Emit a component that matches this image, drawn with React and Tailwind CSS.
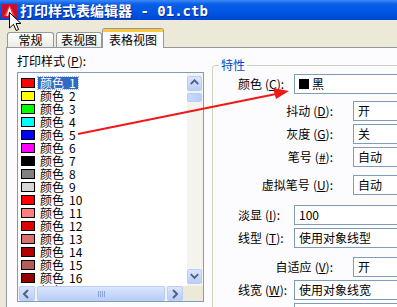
import React from "react";

const swatches = [
  "#ff0000", "#ffff00", "#00ff00", "#00ffff", "#0000ff", "#ff00ff",
  "#000000", "#808080", "#d6d6d6", "#ff0000", "#ff7f7f", "#dd0000",
  "#dd6e6e", "#b00000", "#b35c5c", "#960000", "#cc0000",
];

const props = [
  { t: "颜色", k: "C", v: "黑", wide: true, mt: "mt-[2px]", swatch: true },
  { t: "抖动", k: "D", v: "开", mt: "mt-[7px]" },
  { t: "灰度", k: "G", v: "关", mt: "mt-[3px]" },
  { t: "笔号", k: "#", v: "自动", mt: "mt-[3px]" },
  { t: "虚拟笔号", k: "U", v: "自动", mt: "mt-[8px]" },
  { t: "淡显", k: "I", v: "100", wide: true, mt: "mt-[10px]" },
  { t: "线型", k: "T", v: "使用对象线型", wide: true, mt: "mt-[3px]" },
  { t: "自适应", k: "V", v: "开", mt: "mt-[9px]" },
  { t: "线宽", k: "W", v: "使用对象线宽", wide: true, mt: "mt-[3px]" },
  { t: "端点", k: "E", v: "使用对象端点样式", wide: true, mt: "mt-[3px]" },
];

function Arrow({ dir }) {
  const d = {
    up: "M3 7 L7 3 L11 7",
    down: "M3 4 L7 8 L11 4",
    left: "M8 3 L4 7 L8 11",
    right: "M5 3 L9 7 L5 11",
  }[dir];
  return (
    <svg width="14" height="14" viewBox="0 0 14 14">
      <path d={d} fill="none" stroke="#4d6185" strokeWidth="2" />
    </svg>
  );
}

function ScrollBtn({ dir, className = "" }) {
  return (
    <div className={`flex shrink-0 items-center justify-center rounded-[2px] border border-[#b9cdf7] bg-[linear-gradient(to_bottom,#dbe6fd,#b9cdf9)] ${className}`}>
      <Arrow dir={dir} />
    </div>
  );
}

function Label({ t, k }) {
  return (
    <>
      {t}
      <span className="ml-[3px]">(<u>{k}</u>):</span>
    </>
  );
}

export default function App() {
  return (
    <div className="relative flex h-[307px] w-[397px] flex-col overflow-hidden bg-[#ece9d8] font-['Noto_Sans_CJK_SC',sans-serif] text-[12px] leading-[14px] text-black">
      {/* title bar */}
      <div className="flex h-[20px] shrink-0 items-center bg-[linear-gradient(to_bottom,#3d8af7_0%,#0a5fe8_20%,#0055e5_60%,#0046d4_100%)]">
        <svg width="15" height="15" viewBox="0 0 15 15" className="ml-[2px]">
          <rect x="0" y="1" width="15" height="14" fill="#c8102e" />
          <path d="M2 13 L7.5 2 L13 13 Z" fill="#ff3b3b" />
          <path d="M5 13 L7.5 6 L10 13" fill="none" stroke="#fff" strokeWidth="1.5" />
        </svg>
        <span className="ml-[3px] text-[14px] font-bold leading-[18px] text-white [text-shadow:1px_1px_#0b2a8a]">
          打印样式表编辑器<span className="font-['DejaVu_Sans_Mono',monospace]"> - 01.ctb</span>
        </span>
      </div>

      {/* tabs */}
      <div className="flex h-[27px] shrink-0 items-end pl-[7px]">
        <div className="flex h-[15px] w-[47px] items-center justify-center rounded-t-[3px] border border-b-0 border-[#919b9c] bg-[linear-gradient(to_bottom,#ffffff,#ecebe6)]">常规</div>
        <div className="ml-[2px] flex h-[15px] w-[46px] items-center justify-center rounded-t-[3px] border border-b-0 border-[#919b9c] bg-[linear-gradient(to_bottom,#ffffff,#ecebe6)]">表视图</div>
        <div className="relative z-10 -mb-[1px] flex h-[20px] w-[62px] flex-col rounded-t-[3px] border border-b-0 border-[#919b9c] bg-[#fcfcfe]">
          <div className="h-[3px] rounded-t-[2px] bg-[#ffc83c]" />
          <div className="flex flex-1 items-center justify-center">表格视图</div>
        </div>
      </div>

      {/* tab page */}
      <div className="ml-[6px] flex min-h-0 flex-1 border-l border-t border-[#919b9c] bg-[#fcfcfe] pl-[10px]">
        {/* left list */}
        <div className="flex w-[187px] shrink-0 flex-col">
          <div className="mt-[6px] h-[14px] shrink-0">打印样式<span className="ml-[2px]">(<u>P</u>):</span></div>
          <div className="mt-[4px] flex h-[230px] shrink-0 flex-col border border-[#7f9db9] bg-white">
            <div className="flex h-[213px] shrink-0">
              <div className="flex flex-1 flex-col overflow-hidden pl-[3px] pt-[3px]">
                {swatches.map((c, i) => (
                  <div key={i} className="flex h-[13px] shrink-0 items-center leading-[12px]">
                    <div className="h-[10px] w-[14px] border border-black" style={{ backgroundColor: c }} />
                    <span className={`ml-[3px] flex h-[12px] items-center px-[2px] leading-[12px] ${i === 0 ? "bg-[#316ac5] text-white outline-dotted outline-1 outline-[#9bb6e2]" : ""}`}>
                      颜色<span className="ml-[5px]">{i + 1}</span>
                    </span>
                  </div>
                ))}
              </div>
              <div className="flex w-[16px] flex-col bg-[#f4f3ee] pb-[2px] pt-[3px]">
                <ScrollBtn dir="up" className="h-[15px] w-[15px]" />
                <div className="mt-[2px] h-[9px] w-[15px] rounded-[2px] border border-[#b9cdf7] bg-[linear-gradient(to_right,#cbdafc,#b9cdf9)]" />
                <div className="flex-1" />
                <ScrollBtn dir="down" className="h-[15px] w-[15px]" />
              </div>
            </div>
            <div className="flex h-[15px] shrink-0 bg-[#f4f3ee]">
              <ScrollBtn dir="left" className="ml-[1px] h-[15px] w-[16px]" />
              <div className="ml-[2px] flex h-[15px] w-[128px] items-center justify-center rounded-[2px] border border-[#b9cdf7] bg-[linear-gradient(to_bottom,#dbe6fd,#b9cdf9)]">
                <div className="flex gap-[1px]">
                  {[0, 1, 2, 3].map((g) => (
                    <div key={g} className="h-[6px] w-[1px] bg-[#8ca4dc]" />
                  ))}
                </div>
              </div>
              <ScrollBtn dir="right" className="ml-[2px] h-[15px] w-[16px]" />
              <div className="flex-1 bg-[#ece9d8]" />
            </div>
          </div>
        </div>

        {/* properties group */}
        <fieldset className="ml-[8px] mt-[10px] h-[270px] w-[200px] shrink-0 rounded-[3px] border border-[#d0d0bf]">
          <legend className="ml-[6px] px-[2px] leading-[14px] text-[#0046d5]">特性</legend>
          {props.map((p, i) => (
            <div key={i} className={`flex h-[20px] shrink-0 items-center ${p.mt}`}>
              {p.wide ? (
                <div className="w-[81px] shrink-0 pl-[25px]">
                  <Label t={p.t} k={p.k} />
                </div>
              ) : (
                <div className="w-[140px] shrink-0 pr-[20px] text-right">
                  <Label t={p.t} k={p.k} />
                </div>
              )}
              <div className="flex h-[20px] flex-1 items-center border border-[#7f9db9] bg-white pl-[4px]">
                {p.swatch && <div className="mr-[3px] h-[10px] w-[10px] bg-black" />}
                {p.v}
              </div>
            </div>
          ))}
        </fieldset>
      </div>

      {/* red annotation arrow */}
      <svg className="pointer-events-none absolute left-0 top-0" width="397" height="307">
        <line x1="78" y1="134" x2="276" y2="94" stroke="#f01818" strokeWidth="2" />
        <path d="M289 91 L273 88 L276 99 Z" fill="#f01818" />
      </svg>

      {/* mouse cursor */}
      <svg className="pointer-events-none absolute left-[9px] top-[12px]" width="13" height="20" viewBox="0 0 13 20">
        <path d="M0.5 0.5 L0.5 16 L4.5 12.3 L7.2 18.5 L9.6 17.5 L7 11.5 L12 11.5 Z" fill="#fff" stroke="#000" strokeWidth="1" />
      </svg>
    </div>
  );
}
